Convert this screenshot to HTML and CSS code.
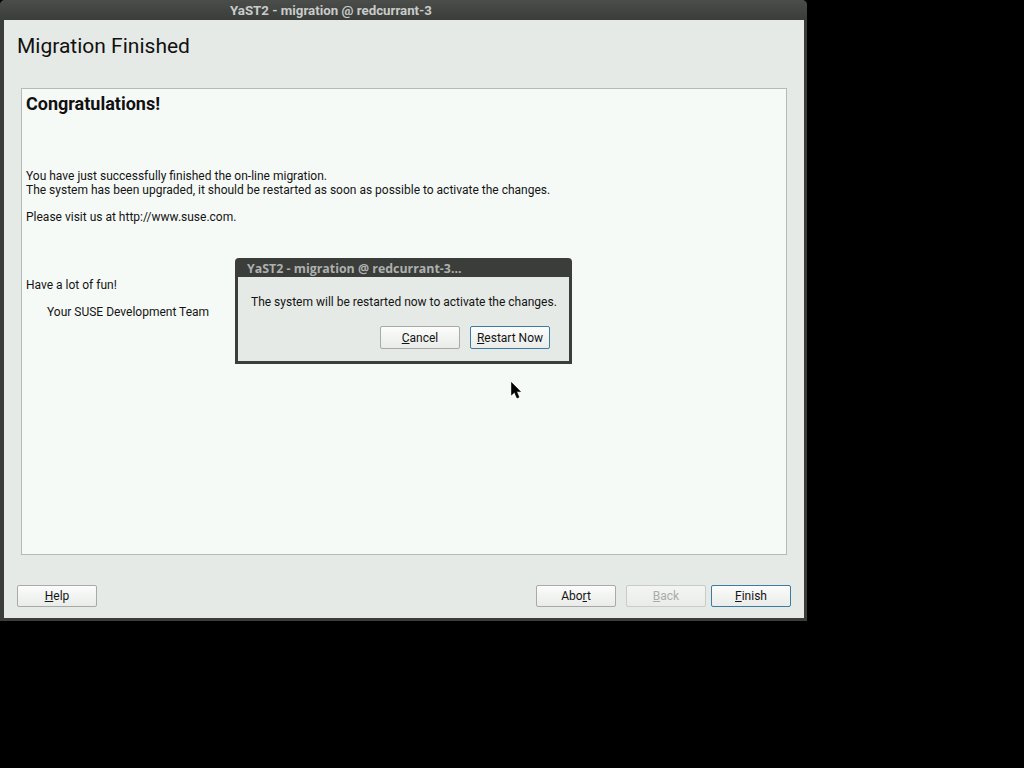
FILE: index.html
```html
<!DOCTYPE html>
<html>
<head>
<meta charset="utf-8">
<link rel="stylesheet" href="styles.css">
</head>
<body>
<div class="window">
  <div class="titlebar">YaST2 - migration @ redcurrant-3</div>
  <div class="client">
    <h1 class="heading">Migration Finished</h1>
    <div class="richtext">
      <h2 class="congrats">Congratulations!</h2>
      <p class="para">You have just successfully finished the on-line migration.<br>The system has been upgraded, it should be restarted as soon as possible to activate the changes.</p>
      <p class="para">Please visit us at http://www.suse.com.</p>
      <p class="para fun">Have a lot of fun!</p>
      <p class="para team">Your SUSE Development Team</p>
    </div>
    <div class="buttons">
      <button class="btn"><u>H</u>elp</button>
      <span class="spacer"></span>
      <button class="btn">Abo<u>r</u>t</button>
      <button class="btn disabled"><u>B</u>ack</button>
      <button class="btn default"><u>F</u>inish</button>
    </div>
  </div>
</div>

<div class="dialog">
  <div class="dlg-title">YaST2 - migration @ redcurrant-3...</div>
  <div class="dlg-client">
    <p class="dlg-text">The system will be restarted now to activate the changes.</p>
    <div class="dlg-buttons">
      <button class="btn"><u>C</u>ancel</button>
      <button class="btn default"><u>R</u>estart Now</button>
    </div>
  </div>
</div>

<svg class="cursor" width="12" height="18" viewBox="0 0 12 18">
  <path d="M0.5 0.5 L0.5 13 L3.5 10.2 L6 16 L8 15.2 L5.6 9.6 L9.5 9.6 Z" fill="#000" stroke="#000" stroke-width="0.6"/>
</svg>
</body>
</html>
```
FILE: styles.css
```css
html, body {
  margin: 0;
  padding: 0;
  background: #000;
  width: 1024px;
  height: 768px;
  overflow: hidden;
  font-family: Roboto, "Liberation Sans", sans-serif;
  font-size: 12px;
  color: #141414;
}

.window {
  width: 807px;
  height: 621px;
  background: #3a3d3a;
  border-radius: 5px 5px 0 0;
  display: flex;
  flex-direction: column;
}

.titlebar {
  height: 20px;
  line-height: 21px;
  padding-left: 230px;
  color: #c9cbc9;
  font-weight: bold;
  font-size: 13.3px;
  background: linear-gradient(#4a4d4a, #3a3d3a);
  border-radius: 5px 5px 0 0;
}

.client {
  flex: 1;
  margin: 0 3px 3px 4px;
  background: #e6eae6;
  display: flex;
  flex-direction: column;
  padding: 0 17px;
}

.heading {
  margin: 0 0 0 -4px;
  height: 68px;
  box-sizing: border-box;
  padding-top: 14px;
  font-size: 21px;
  font-weight: normal;
  line-height: 25px;
  color: #111;
}

.richtext {
  height: 467px;
  box-sizing: border-box;
  border: 1px solid #b7bab7;
  background: #f6faf7;
  padding: 3px 4px;
}

.congrats {
  margin: 0;
  font-size: 18px;
  font-weight: bold;
  line-height: 24px;
  height: 77px;
  color: #111;
}

.para {
  margin: 0 0 13px 0;
  line-height: 14px;
}

.fun {
  margin-top: 54px;
}

.team {
  padding-left: 21px;
}

.buttons {
  display: flex;
  margin: 30px -4px 0 -4px;
  height: 22px;
}

.spacer { flex: 1; }

.btn {
  width: 80px;
  height: 22px;
  box-sizing: border-box;
  border: 1px solid #a7aaa7;
  border-radius: 2px;
  background: linear-gradient(#fbfcfb, #e9ece9);
  font-family: Roboto, "Liberation Sans", sans-serif;
  font-size: 12px;
  color: #141414;
  padding: 0;
  margin: 0;
}

.buttons .btn + .btn { margin-left: 10px; }
.buttons .btn.default { margin-left: 5px; }

.btn.disabled {
  color: #a9aca9;
  border-color: #c9ccc9;
  background: linear-gradient(#f3f5f3, #e9ece9);
}

.btn.default {
  border-color: #3b7ca3;
}

.dialog {
  position: absolute;
  left: 235px;
  top: 258px;
  width: 337px;
  height: 106px;
  box-sizing: border-box;
  background: #3a3d3a;
  border-radius: 4px 4px 0 0;
  display: flex;
  flex-direction: column;
}

.dlg-title {
  height: 19px;
  line-height: 21px;
  padding-left: 12px;
  color: #aeb1ae;
  font-family: "Open Sans", sans-serif;
  font-weight: bold;
  font-size: 12.4px;
}

.dlg-client {
  flex: 1;
  margin: 0 3px 3px 3px;
  background: #e6eae6;
  display: flex;
  flex-direction: column;
}

.dlg-text {
  margin: 0;
  padding: 17px 0 0 13px;
  line-height: 16px;
}

.dlg-buttons {
  display: flex;
  justify-content: flex-end;
  gap: 10px;
  padding: 16px 19px 0 0;
}

.dlg-buttons .btn {
  height: 23px;
}

.cursor {
  position: absolute;
  left: 511px;
  top: 382px;
}
```
